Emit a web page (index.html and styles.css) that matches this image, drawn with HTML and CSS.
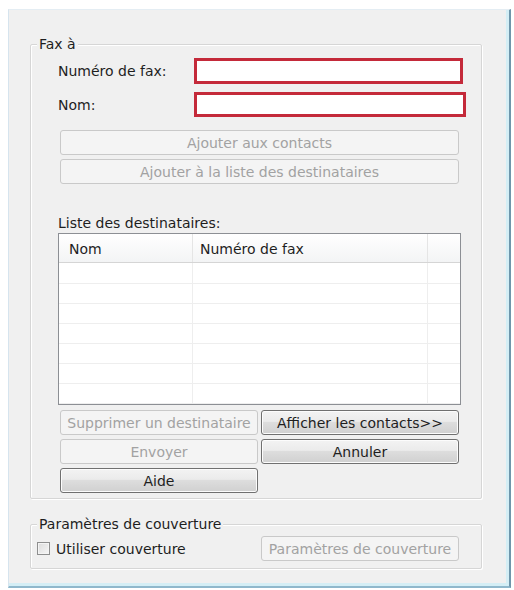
FILE: index.html
```html
<!DOCTYPE html>
<html lang="fr">
<head>
<meta charset="utf-8">
<title>Fax</title>
<link rel="stylesheet" href="styles.css">
</head>
<body>
<div class="window">
  <fieldset class="group fax-group">
    <legend>Fax à</legend>
    <div class="fax-body">
      <div class="field-row">
        <label class="field-label">Numéro de fax:</label>
        <input class="field-input w1" type="text">
      </div>
      <div class="field-row row2">
        <label class="field-label">Nom:</label>
        <input class="field-input w2" type="text">
      </div>
      <div class="btn-stack">
        <button class="btn disabled">Ajouter aux contacts</button>
        <button class="btn disabled">Ajouter à la liste des destinataires</button>
      </div>
      <div class="list-label">Liste des destinataires:</div>
      <div class="table">
        <div class="thead">
          <div class="th c1">Nom</div>
          <div class="th c2">Numéro de fax</div>
          <div class="th c3"></div>
        </div>
        <div class="tbody">
          <div class="tr first"><div class="td c1"></div><div class="td c2"></div><div class="td c3"></div></div>
          <div class="tr"><div class="td c1"></div><div class="td c2"></div><div class="td c3"></div></div>
          <div class="tr"><div class="td c1"></div><div class="td c2"></div><div class="td c3"></div></div>
          <div class="tr"><div class="td c1"></div><div class="td c2"></div><div class="td c3"></div></div>
          <div class="tr"><div class="td c1"></div><div class="td c2"></div><div class="td c3"></div></div>
          <div class="tr"><div class="td c1"></div><div class="td c2"></div><div class="td c3"></div></div>
          <div class="tr"><div class="td c1"></div><div class="td c2"></div><div class="td c3"></div></div>
        </div>
      </div>
      <div class="btn-grid">
        <button class="btn disabled">Supprimer un destinataire</button>
        <button class="btn active">Afficher les contacts&gt;&gt;</button>
        <button class="btn disabled">Envoyer</button>
        <button class="btn active">Annuler</button>
        <button class="btn active">Aide</button>
      </div>
    </div>
  </fieldset>
  <fieldset class="group cover-group">
    <legend>Paramètres de couverture</legend>
    <div class="cover-body">
      <label class="check"><span class="box"></span>Utiliser couverture</label>
      <button class="btn disabled cover-btn">Paramètres de couverture</button>
    </div>
  </fieldset>
</div>
</body>
</html>
```
FILE: styles.css
```css
html, body {
  margin: 0;
  padding: 0;
  background: #ffffff;
}
body {
  font-family: "DejaVu Sans", Verdana, sans-serif;
  font-size: 14px;
  color: #1e1e1e;
}
.window {
  margin: 9px 0 0 8px;
  width: 479px;
  height: 550px;
  background: #f0f0f0;
  border-left: 1px solid #d6e4ee;
  border-top: 1px solid #e4edf3;
  border-right: 2px solid #6f96ab;
  border-bottom: 2px solid #8fb8cc;
  box-shadow: inset -3px -3px 0 #d4eef5;
  padding-top: 26px;
  padding-left: 21px;
  box-sizing: content-box;
}
.group {
  margin: 0;
  padding: 0;
  width: 450px;
  border: 1px solid #d6d6d6;
  box-shadow: inset 1px 1px 0 #ffffff, 1px 1px 0 #ffffff;
  border-radius: 2px;
}
.group legend {
  margin-left: 6px;
  padding: 0 2px;
  height: 16px;
  line-height: 16px;
  background: #f0f0f0;
  color: #1e1e1e;
}
.fax-body {
  padding: 6px 0 5px 27px;
}
.field-row {
  display: flex;
  align-items: center;
}
.row2 {
  margin-top: 8px;
}
.field-label {
  width: 136px;
  flex: none;
}
.field-input {
  box-sizing: border-box;
  margin: 0;
  padding: 0;
  background: #ffffff;
  border: 3px solid #c42a3a;
  outline: none;
  font: inherit;
}
.w1 { width: 269px; height: 26px; }
.w2 { width: 272px; height: 25px; }
.btn {
  box-sizing: border-box;
  height: 25px;
  margin: 0;
  padding: 0;
  font: inherit;
  border-radius: 3px;
  text-align: center;
  white-space: nowrap;
}
.btn.disabled {
  color: #a2a2a2;
  background: #f4f4f4;
  border: 1px solid #c9c9c9;
}
.btn.active {
  color: #1e1e1e;
  background: linear-gradient(#f3f3f3 0%, #ebebeb 45%, #dddddd 50%, #d0d0d0 100%);
  border: 1px solid #707070;
  box-shadow: inset 0 0 0 1px #fcfcfc;
}
.btn-stack {
  margin: 13px 0 0 2px;
  width: 399px;
  display: flex;
  flex-direction: column;
  gap: 4px;
}
.list-label {
  margin-top: 31px;
  line-height: 16px;
  height: 16px;
}
.table {
  margin-top: 2px;
  width: 403px;
  height: 172px;
  box-sizing: border-box;
  border: 1px solid #8c8f94;
  background: #ffffff;
  overflow: hidden;
}
.thead {
  display: flex;
  height: 28px;
  background: linear-gradient(#ffffff, #f3f4f5);
  border-bottom: 1px solid #d5d5d5;
}
.th {
  box-sizing: border-box;
  padding-top: 3px;
  line-height: 25px;
  border-right: 1px solid #e5e5e5;
}
.c1 { width: 134px; flex: none; }
.c2 { width: 235px; flex: none; }
.c3 { flex: 1; border-right: none; }
.th.c1 { padding-left: 10px; }
.th.c2 { padding-left: 7px; }
.tr {
  display: flex;
  height: 19px;
  border-bottom: 1px solid #eeeeee;
}
.tr.first {
  height: 20px;
}
.td {
  box-sizing: border-box;
  border-right: 1px solid #eeeeee;
}
.td.c3 { border-right: none; }
.btn-grid {
  margin: 5px 0 0 2px;
  display: grid;
  grid-template-columns: 198px 198px;
  column-gap: 3px;
  row-gap: 4px;
}
.cover-group {
  margin-top: 17px;
}
.cover-body {
  display: flex;
  align-items: center;
  justify-content: space-between;
  padding: 4px 22px 7px 6px;
}
.check {
  display: flex;
  align-items: center;
}
.box {
  box-sizing: border-box;
  width: 13px;
  height: 13px;
  margin-right: 6px;
  border: 1px solid #8e8f8f;
  background: linear-gradient(135deg, #dcdcdc, #f6f6f6);
  box-shadow: inset 0 0 0 1px #f4f4f4;
}
.cover-btn {
  width: 198px;
}
```
